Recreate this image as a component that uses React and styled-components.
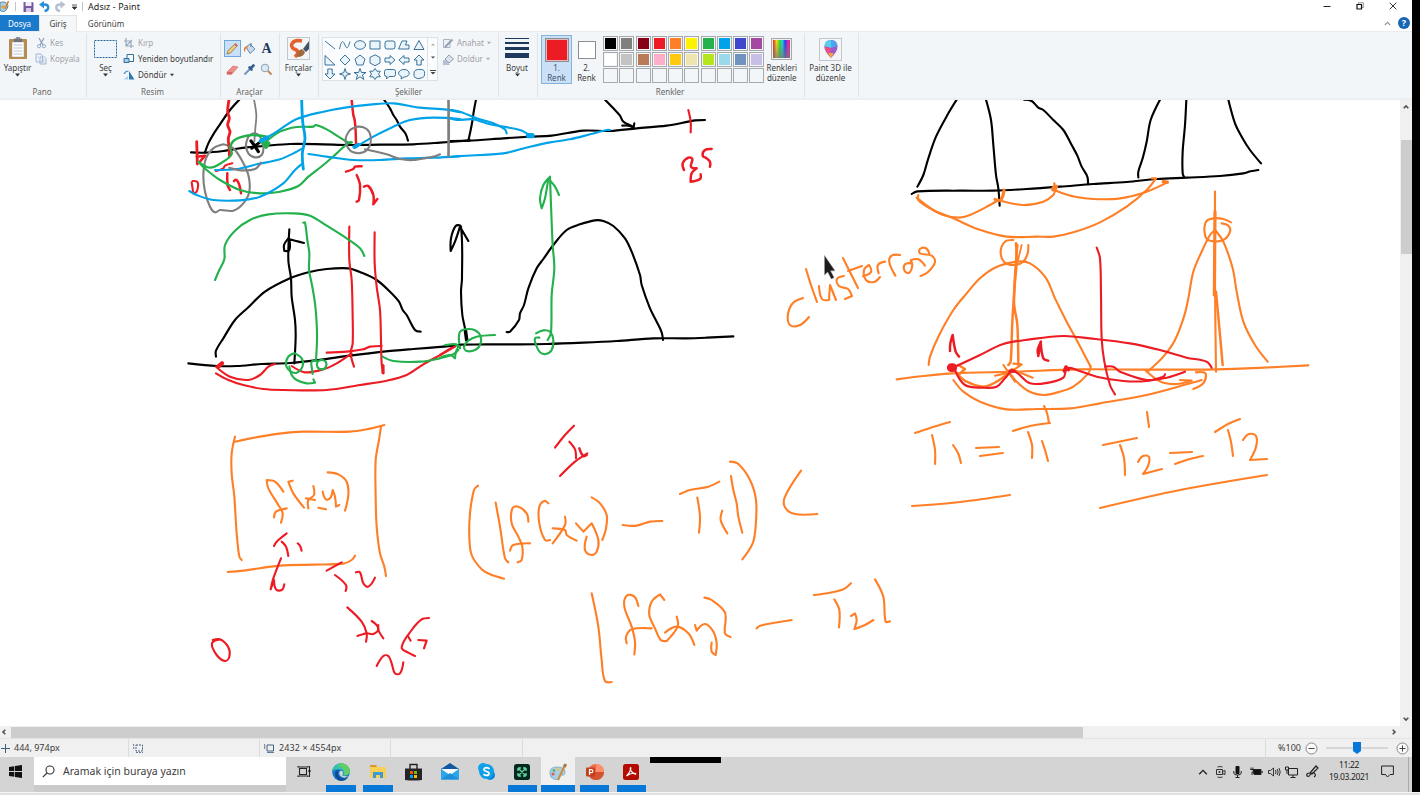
import React from "react";
import styled, { createGlobalStyle } from "styled-components";

const Global = createGlobalStyle`
  * { box-sizing: border-box; }
  html, body { margin: 0; padding: 0; overflow: hidden; background: #000; }
  body { font-family: "Noto Sans", "Open Sans", sans-serif; color: #3c3c3c; }
  svg { display: block; flex: none; }
`;

const Screen = styled.div`
  width: 1420px; height: 795px; display: flex; flex-direction: column; background: #000; overflow: hidden;
`;
const Desktop = styled.div`
  width: 1412px; height: 792px; display: flex; flex-direction: column; background: #fff;
`;
const BottomEdge = styled.div`
  height: 3px; background: #e1e1e1; border-top: 1px solid #f4f4f4;
`;
const Text = styled.span`
  font-size: ${(p) => p.$size || 8}px; line-height: 10px; white-space: nowrap;
  letter-spacing: ${(p) => p.$track || 0}px; color: ${(p) => p.$color || "#3c3c3c"};
`;

const TitleBar = styled.div`
  height: 15px; display: flex; align-items: center; flex: none;
`;
const QuickAccess = styled.div`
  display: flex; align-items: center; width: 88px; flex: none;
`;
const Title = styled(Text)`flex: 1; color: #1c1c1c; margin-top: -1px;`;
const WindowButtons = styled.div`
  display: flex; gap: 25px; padding-right: 15px; margin-top: -3px;
`;

const Tabs = styled.div`
  height: 17px; display: flex; flex: none; border-bottom: 1px solid #e9ebec;
`;
const Tab = styled.div`
  width: ${(p) => p.$w}px; height: ${(p) => (p.$active ? 17 : 16)}px; display: flex; align-items: center; justify-content: center;
  padding-top: ${(p) => (p.$active ? 0 : 1)}px;
  background: ${(p) => (p.$file ? "#1979ca" : p.$active ? "#f5f7f8" : "#fff")};
  border: solid #e2e4e6; border-width: ${(p) => (p.$active ? "1px 1px 0 1px" : "0")};
`;
const TabTools = styled.div`
  margin-left: auto; display: flex; align-items: center; gap: 7px; padding-right: 2px;
`;
const HelpBadge = styled.div`
  width: 12px; height: 12px; border-radius: 50%; background: #1566b7; color: #fff; font-size: 9px; line-height: 12px; font-weight: bold; text-align: center;
`;

const Ribbon = styled.div`
  height: 68px; display: flex; flex: none; background: #f3f6f8; border-bottom: 2px solid #eceeef;
`;
const Group = styled.section`
  width: ${(p) => p.$w}px; height: 64px; margin-top: 1px; display: flex; flex-direction: column; flex: none;
  border-right: 1px solid #e1e4e7;
`;
const GroupBody = styled.div`
  height: 54px; display: flex; padding-left: ${(p) => p.$left || 0}px;
`;
const Caption = styled.div`
  display: flex; justify-content: center; padding-right: ${(p) => p.$shift || 0}px;
`;
const BigButton = styled.div`
  width: ${(p) => p.$w}px; display: flex; flex-direction: column; align-items: center; flex: none;
  height: 50px; padding-top: ${(p) => (p.$top === undefined ? 4 : p.$top)}px;
`;
const IconSlot = styled.div`
  height: 26px; display: flex; align-items: flex-start; justify-content: center;
`;
const Stack = styled.div`
  display: flex; flex-direction: column; padding-top: 2px; padding-left: ${(p) => p.$left || 0}px;
`;
const SmallButton = styled.div`
  height: 16px; display: flex; align-items: center; gap: 3px;
`;
const ToolGrid = styled.div`
  display: grid; grid-template-columns: repeat(3, 17px); grid-template-rows: repeat(2, 21px);
  margin-top: 5px; justify-items: center; align-items: center;
`;
const ToolCell = styled.div`
  width: 17px; height: 17px; display: flex; align-items: center; justify-content: center;
  background: ${(p) => (p.$on ? "#c9e0f7" : "transparent")};
  border: 1px solid ${(p) => (p.$on ? "#6fa5da" : "transparent")};
`;
const LetterA = styled.span`
  font: bold 14px/14px "Liberation Serif", serif; color: #203a5c;
`;
const Gallery = styled.div`
  width: 116px; height: 44px; margin-top: 4px; display: flex; border: 1px solid #dde1e5; background: #fafcfd;
`;
const ShapeGrid = styled.div`
  flex: 1; display: grid; grid-template-columns: repeat(7, 14.8px); grid-template-rows: repeat(3, 14.4px);
  align-items: center; justify-items: center;
`;
const GalleryScroll = styled.div`
  width: 10px; border-left: 1px solid #dde1e5; display: flex; flex-direction: column; justify-content: space-around; align-items: center;
`;
const ColorButton = styled.div`
  width: ${(p) => p.$w}px; height: 49px; margin-top: 2px; display: flex; flex-direction: column; align-items: center; text-align: center;
  background: ${(p) => (p.$on ? "#c9e0f7" : "transparent")}; border: 1px solid ${(p) => (p.$on ? "#84b4de" : "transparent")};
`;
const ColorSlot = styled.div`
  height: 28px; display: flex; align-items: center; justify-content: center;
`;
const CurrentColor = styled.div`
  width: ${(p) => p.$s}px; height: ${(p) => p.$s}px; background: ${(p) => p.$c};
  border: 1px solid #8b8f94; box-shadow: inset 0 0 0 1px ${(p) => (p.$on ? "#e4b8bd" : "#fff")};
`;
const Palette = styled.div`
  display: grid; grid-template-columns: repeat(10, 15px); grid-auto-rows: 15px; column-gap: 1.25px; row-gap: 1px; margin: 3px 0 0 2px; height: 47px;
`;
const Swatch = styled.div`
  background: ${(p) => p.$c || "#f3f6f8"}; border: 1px solid #a6a9ad; box-shadow: inset 0 0 0 1px ${(p) => (p.$c ? "#f6f6f6" : "#f3f6f8")};
`;
const Rainbow = styled.div`
  width: 21px; height: 22px; border: 1px solid #a9a9a9; padding: 1px; background: #eee;
  &::before { content: ""; display: block; height: 100%;
    background: linear-gradient(0deg, rgba(120,120,120,.75), rgba(120,120,120,0)),
      linear-gradient(90deg, #f21c1c, #f5e616 22%, #28dc28 40%, #18d7de 55%, #2a32e8 72%, #df22d8 88%, #f01c50); }
`;
const Framed = styled.div`
  width: 23px; height: 23px; border: 1px solid #c4c7ca; background: #f4f5f6; display: flex; align-items: center; justify-content: center;
`;

const Work = styled.main`
  height: 626px; display: flex; flex: none;
`;
const Paper = styled.div`
  width: 1400px; height: 626px; background: #fff;
`;
const VScroll = styled.div`
  width: 12px; height: 626px; background: #f0f0f0; display: flex; flex-direction: column; align-items: center; padding: 4px 0;
`;
const VThumb = styled.div`
  width: 11px; height: 114px; margin: 30px 0 auto; background: #cdcdcd;
`;
const HScroll = styled.div`
  height: 13px; display: flex; align-items: center; background: #f0f0f0; flex: none; padding: 0 15px 0 1px; border-bottom: 1px solid #e3e3e3;
`;
const HThumb = styled.div`
  width: 1072px; height: 11px; margin: 0 auto 0 4px; background: #cdcdcd;
`;

const StatusBar = styled.div`
  height: 18px; display: flex; background: #f0f0f0; flex: none;
`;
const StatusCell = styled.div`
  width: ${(p) => p.$w}px; display: flex; align-items: center; gap: 4px; padding-left: ${(p) => p.$pad || 0}px;
  border-right: 1px solid #dcdcdc; flex: none;
`;
const ZoomBox = styled.div`
  flex: 1; display: flex; align-items: center; padding-right: 3px; justify-content: flex-end;
`;
const ZoomValue = styled(Text)`margin-right: 4px;`;
const Slider = styled.div`
  width: 62px; height: 12px; margin: 0 8px; display: flex; align-items: center; justify-content: center;
  background: linear-gradient(#d6d6d6, #d6d6d6) center / 100% 2px no-repeat;
`;

const Taskbar = styled.div`
  height: 35px; display: flex; background: #d4d4d4; flex: none;
`;
const StartButton = styled.div`
  width: 34px; height: 29px; padding-left: 9px; display: flex; align-items: center;
`;
const SearchBox = styled.div`
  width: 252px; height: 28px; background: #fff; display: flex; align-items: center; gap: 8px; padding-left: 8px;
  box-shadow: 0 7px 0 #cbcbcb;
`;
const AppButton = styled.div`
  width: ${(p) => p.$w || 36}px; height: 35px; display: flex; flex-direction: column; align-items: center; flex: none;
`;
const AppFace = styled.div`
  height: 28px; width: ${(p) => p.$bar || 30}px; display: flex; align-items: center; justify-content: center; padding-top: 1px;
  background: ${(p) => (p.$on ? "#f0f0f0" : "transparent")};
`;
const AppBar = styled.div`
  height: 7px; width: ${(p) => p.$bar || 30}px; background: #0778d7;
`;
const Redaction = styled.div`
  width: 71px; height: 6px; background: #000; margin-left: 1px;
`;
const Tray = styled.div`
  margin-left: auto; height: 29px; display: flex; align-items: center;
`;
const TrayIcon = styled.div`
  width: ${(p) => p.$w}px; display: flex; justify-content: center; flex: none;
`;
const Clock = styled.div`
  width: 52px; display: flex; flex-direction: column; align-items: center; gap: 2px; padding-bottom: 1px;
`;
const Peek = styled.div`
  width: 4px; height: 35px; align-self: flex-start; border-left: 1px solid #a9a9a9;
`;

const Caret = ({ c = "#333", s = 5 }) => (
  <svg width={s} height="4" viewBox="0 0 5 4"><path d="M0 .5h5L2.5 3.5z" fill={c} /></svg>
);
const Chevron = ({ r = 0, c = "#505050", s = 6, w = 1.6 }) => (
  <svg width={s} height={s} viewBox="0 0 6 6"><path d="M.7 4.3 3 2l2.3 2.3" transform={`rotate(${r} 3 3)`} fill="none" stroke={c} strokeWidth={w} /></svg>
);

const SHAPES = [
  "M2 2l10 8", "M1.5 10c2-9 3.500-9 5.500-4s3 3 5-3.500", "M12.500 6a5.500 4.300 0 1 1-11 0a5.500 4.300 0 1 1 11 0z", "M2 2h10v8H2z",
  "M4 2h6q2 0 2 2v4q0 2-2 2H4q-2 0-2-2V4q0-2 2-2z", "M5 2h5L8.500 6H12v4H1.500z", "M7 1.500l5 9H2z",
  "M2 1.500v9.500h10z", "M7 1l5 5-5 5-5-5z", "M7 1l5 4-2 6H4L2 5z", "M7 .8l5 2.700v5.500l-5 2.700-5-2.700V3.500z",
  "M2 4h5V1.500L12 6l-5 4.500V8H2z", "M12 4H7V1.500L2 6l5 4.500V8h5z", "M4.800 11V6H2l5-5 5 5H9.200v5z",
  "M4.800 1v5H2l5 5 5-5H9.200V1z", "M7 .5l1.300 4.200L12.500 6 8.300 7.300 7 11.500 5.700 7.300 1.500 6l4.200-1.300z",
  "M7 .5l1.500 4H13L9.500 7l1.300 4.500L7 8.800l-3.800 2.700L4.500 7 1 4.500h4.500z", "M7 .5l1.800 2.700h3.500L10.500 6l1.800 2.800H8.800L7 11.500 5.200 8.800H1.700L3.500 6 1.700 3.200h3.500z",
  "M3.500 1.500h7q2 0 2 2v3q0 2-2 2H6L3.500 11 4 8.500h-.5q-2 0-2-2v-3q0-2 2-2z", "M4 11L4.500 8.600C-1 6 2 1.500 7 1.500c7 0 7 7.500 0 7.500z",
  "M4 10q-3-1-2-4-.500-3 2-4 3-1 5-.5 4 0 3.500 4 .5 4-3.500 4.500Q6 11.500 4 10z",
];

const PALETTE = ["#000", "#7f7f7f", "#880015", "#ed1c24", "#ff7f27", "#fff200", "#22b14c", "#00a2e8", "#3f48cc", "#a349a4",
  "#fff", "#c3c3c3", "#b97a57", "#ffaec9", "#ffc90e", "#efe4b0", "#b5e61d", "#99d9ea", "#7092be", "#c8bfe7",
  "", "", "", "", "", "", "", "", "", ""];

const K = "#000", G = "#22b14c", R = "#ed1c24", B = "#00a2e8", S = "#7f7f7f", O = "#ff7f27";

/* Ink sheets: each has an origin on the screen, a unit scale and its pen strokes [colour, width, points]. */
const SHEETS = [
  { x: 180, y: 95, k: 3, strokes: [
    [K, 6, "33,172 75,173 130,168 160,163 200,157 250,153 330,147 430,148 500,150 600,149 700,148 780,143 870,136"],
    [K, 6, "178,14 150,45 120,88 100,118 85,145 75,172"],
    [K, 9, "213,138 222,150 235,170"], [K, 8, "215,160 238,143"],
    [K, 6, "612,14 630,40 640,60 650,75 660,95 676,115 684,137"],
    [S, 5, "222,14 229,60 226,100 223,140"],
    [S, 6, "205,125 198,150 205,175 225,187 245,180 250,155 240,125 222,115 205,125"],
    [S, 6, "130,148 100,160 78,190 70,240 75,290 90,335 105,352 120,345 160,347 190,325 208,290 205,240 185,195 160,160 130,148"],
    [R, 8, "147,14 143,50 148,70 143,90 150,110 145,130 148,165 148,182"],
    [R, 8, "50,140 51,170 52,207"], [R, 7, "50,185 75,182 60,200"],
    [R, 7, "515,14 520,60 524,75 527,110 528,150"],
    [R, 6, "108,228 130,220 135,212 157,205"], [R, 7, "142,235 143,270 150,285 142,270"],
    [R, 7, "162,258 170,255 178,270 183,295"], [R, 6, "35,262 40,295 50,290 53,262 38,258"],
    [R, 7, "498,230 520,222 525,215 545,214"], [R, 7, "530,240 540,270 537,315 530,320"],
    [R, 7, "552,275 565,273 580,300 580,328 592,312"],
    [G, 7, "150,155 160,138 180,127 215,120 260,125"],
    [G, 6, "258,140 300,110 350,96 400,95 407,90 440,103 480,128 500,140 515,142"],
    [G, 6, "150,160 155,178 130,200 90,218 55,200 80,225 120,255 180,285 240,295 300,290 355,273 385,245 430,210 470,175 500,148 515,142"],
    [G, 12, "250,145 265,145 258,155"],
    [B, 8, "365,14 368,80 375,130 367,175 370,222"],
    [B, 6, "240,140 290,110 350,72 430,50 500,37 570,29 640,25 720,38 800,44 840,52"],
    [B, 12, "243,137 262,128"], [B, 11, "523,156 535,149"],
    [B, 6, "525,158 580,125 640,95 690,75 760,68 840,72"],
    [B, 6, "105,225 170,222 230,208 300,193 340,175 368,160"],
    [B, 6, "28,288 50,300 100,315 180,316 240,305 310,265 345,225 368,205"],
    [B, 6, "385,177 440,185 520,195 600,195 680,190 760,188 840,184"],
    [S, 6, "148,218 185,226 225,222 243,203"],
    [S, 6, "510,105 497,130 502,155 520,172 550,172 568,155 572,125 560,102 535,95 510,105"],
    [S, 6, "555,163 620,178 660,192 700,195 745,188 765,184 780,178"],
    [S, 6, "806,14 805,100 806,185"],
  ] },
  { x: 440, y: 95, k: 3, strokes: [
    [K, 6, "30,138 85,137 190,130 270,125 335,122 430,107 510,108 590,100 680,92 745,80 765,76 795,75"],
    [K, 6, "108,14 102,45 95,90 85,137"], [K, 6, "495,14 520,40 540,62 550,80 580,95"],
    [K, 6, "547,92 565,92 580,98"], [K, 6, "583,85 580,100"],
    [S, 6, "25,14 27,100 25,185"],
    [B, 6, "30,45 60,50 110,70 160,85 195,103 200,115"],
    [B, 6, "30,70 50,75 100,73 150,88 240,105 270,122"], [B, 15, "266,122 276,122"],
    [B, 6, "30,186 60,183 190,175 270,155 330,142 390,133 450,118 500,105 510,105"],
    [R, 6, "745,45 752,80 752,112"],
    [R, 7, "732,225 728,205 745,188 757,192 753,215 770,220 755,235 752,260 780,252 782,238"],
    [R, 7, "815,162 795,165 788,182 800,190 810,200 810,215"],
    [K, 6, "80,735 75,700 67,660 63,590 66,550 63,395 47,393 33,430 32,468 45,440 60,395 85,438"],
    [K, 10, "76,705 80,735"],
    [K, 6, "200,711 210,710 237,675 240,655 252,630 265,580 290,520 310,492 340,450 380,405 420,388 465,376 490,378 520,393 555,430 575,470 600,540 605,570 630,640 650,680 665,712 669,735"],
    [K, 6, "60,749 140,748 230,748 320,747 430,743 530,738 640,730 740,730 800,728 880,724"],
    [G, 6, "323,735 333,712 335,600 343,520 338,450 333,330 330,245 310,270 300,310 305,340 315,310 325,250 345,275 357,300"],
    [G, 6, "288,715 310,706 330,710 340,735 335,765 317,777 300,772 288,750 285,730 298,728"],
    [G, 6, "60,760 58,715 75,703 105,706 122,725 120,750 105,765 80,768 72,755 85,737 110,725 165,720"],
    [G, 6, "0,788 30,780 45,790 48,770 58,750"], [G, 6, "10,755 40,748 60,752"], [R, 6, "0,780 45,752"],
  ] },
  { x: 180, y: 200, k: 3, strokes: [
    [K, 6, "328,88 325,180 333,235 335,290 345,360 347,410 343,490"],
    [K, 6, "325,115 312,135 313,153 328,150 328,118 345,122 372,129"],
    [K, 6, "108,470 108,452 130,415 165,360 205,322 255,275 330,235 385,217 440,207 505,205 545,218 590,240 630,275 657,305 668,330 680,345 705,390 722,395"],
    [K, 6, "25,490 110,498 170,498 245,492 330,489 415,480 510,467 610,455 700,447 790,440 840,435"],
    [R, 6, "508,80 508,180 515,240 518,350 518,430 512,460 522,500"],
    [R, 6, "584,97 584,190 590,260 600,330 603,420 605,490 610,520"], [R, 9, "609,497 609,518"],
    [R, 6, "440,458 500,455 550,448 570,440 605,438"], [R, 6, "335,498 375,517 430,508 470,490 515,460"],
    [R, 12, "115,499 126,490"], [R, 6, "108,500 150,530 205,540 240,525 265,500 285,492"],
    [R, 6, "108,520 145,540 190,555 250,567 310,570 440,570 540,555 620,542 680,525 730,493 790,460 825,440"],
    [G, 6, "105,240 118,210 133,178 135,135 165,92 210,60 265,43 340,40 390,47 440,77 500,115 540,145 553,168"],
    [G, 6, "370,68 375,68 382,120 388,160 387,210 395,250 405,310 410,370 411,420 408,480"],
    [G, 6, "343,460 325,470 318,495 330,513 350,518 368,498 365,475 345,460"],
    [G, 6, "425,479 413,485 412,500 425,508 438,500 437,485 425,479"],
    [G, 6, "410,483 395,485 395,500 398,522"], [G, 6, "328,500 335,525 350,540 380,550 405,548 400,538"],
    [G, 6, "608,470 640,483 720,485 780,475 820,463 835,450"], [G, 6, "795,435 825,433 840,440"],
  ] },
  { x: 880, y: 95, k: 3, strokes: [
    [K, 6, "230,14 205,55 168,125 145,190 130,240 112,275"], [K, 6, "318,14 333,75 340,150 348,240 355,280 359,332"],
    [K, 6, "432,14 455,18 475,38 490,45 520,75 550,105 575,150 592,182 605,215 622,245 624,268"],
    [K, 6, "840,14 812,75 800,140 788,190 775,230 775,247"], [K, 6, "919,14 915,90 908,170 908,235 913,247"],
    [K, 6, "1045,14 1065,85 1085,125 1110,165 1143,205"],
    [K, 6, "95,297 112,289 240,287 340,287 440,282 540,275 640,267 740,261 830,252 920,248 1020,243 1090,235 1112,229 1135,225"],
    [O, 6, "115,300 115,315 150,340 190,360 235,368 270,360 330,330 355,315"],
    [O, 6, "110,308 160,345 220,370 295,403 380,425 470,425 520,425 580,412 660,382 740,335 800,285 828,250 815,250"],
    [O, 6, "365,318 430,330 490,320 520,300 525,285 540,292 585,305 640,312 720,310 800,290 862,262"],
    [O, 14, "520,282 527,276"], [O, 6, "523,265 523,285"], [O, 9, "372,285 362,315 345,313"], [O, 10, "850,260 862,262"],
    [O, 6, "50,853 130,843 220,835 400,830 600,823 800,824 1010,823 1150,818 1285,811"],
    [O, 6, "146,810 150,785 175,725 220,645 260,595 300,550 345,518 410,500 450,505 497,548 525,610 560,680 590,735 632,815"],
    [O, 6, "400,435 375,440 362,470 372,500 400,510 430,500 443,475 445,450"],
    [O, 7, "408,445 410,500 405,560 397,680 392,800 385,810"], [O, 7, "412,450 402,620 412,690 415,810"], [O, 5, "425,450 413,500"],
    [O, 6, "1005,290 1005,560 1008,830"], [O, 9, "1005,350 1003,600"], [O, 7, "1008,590 1020,720 1028,810"],
    [O, 6, "1053,382 1030,372 1000,370 978,380 975,420 990,437 1030,435 1050,410 1045,392 1025,385"],
    [O, 6, "1163,800 1125,750 1090,680 1070,590 1058,520 1030,440 1005,405 990,420 965,470 940,530 925,610 912,665 885,735 850,785 805,828"],
    [O, 6, "220,855 250,890 300,920 380,943 470,942 570,940 660,925 800,900 920,868 965,855"],
    [O, 6, "940,882 970,865 978,840 970,832 948,832"], [O, 6, "795,825 825,850 850,863 890,867 935,857 900,855"],
    [O, 6, "632,815 625,835 580,875 540,890 490,900 445,888 410,860 390,835"],
    [O, 7, "235,810 255,822 235,840 260,860 310,875 350,860 385,835"],
    [O, 6, "370,810 405,860"], [O, 6, "345,842 390,830 425,808 400,806"], [O, 6, "458,848 395,822"],
    [R, 6, "650,458 660,490 663,600 665,730 673,800 690,870 705,898"],
    [R, 6, "215,820 300,780 370,747 450,733 550,723 630,730 750,745 840,765 920,788 980,800 995,818"],
    [R, 6, "225,825 255,870 310,878 350,875 375,850 400,828 450,865 510,862 550,848 562,820 590,825 650,845 730,858 800,858 850,845 855,838"],
    [R, 6, "675,815 700,815 720,830 800,855 860,848 915,830"],
    [R, 7, "210,768 211,745 218,720 227,770 237,785"], [R, 7, "483,740 473,765 475,783 482,740 490,790 505,797"],
    [R, 25, "214,818 218,818"], [R, 10, "390,828 402,828"], [R, 10, "553,828 558,816 565,824"],
    [O, 6, "-4,535 -6,510 15,500"], [O, 6, "46,542 28,502 35,482 60,480"],
    [O, 6, "95,505 75,508 74,528 88,533 97,510 92,496 115,493 135,512"],
    [O, 6, "148,475 138,460 120,462 120,475 155,482 165,502 145,530 122,543"],
  ] },
  { x: 200, y: 410, k: 3, strokes: [
    [O, 6, "105,80 95,130 95,190 103,260 110,370 118,440 125,450"], [O, 6, "105,95 180,80 245,70 310,65 450,65 500,58 553,45"],
    [O, 6, "543,50 537,90 527,150 527,260 530,350 540,430 553,470 558,498"], [O, 6, "83,486 130,482 240,467 340,464 430,461 455,450 465,437"],
    [O, 6, "250,245 225,215 200,210 205,235 235,285 248,310 243,338"], [O, 6, "222,322 228,305 260,295"],
    [O, 6, "278,212 265,215 280,250 312,293"], [O, 6, "340,228 342,255 325,270 325,295"], [O, 6, "318,265 345,270"],
    [O, 6, "355,293 378,298"], [O, 6, "368,245 378,268 392,262 398,240 405,260 408,290 418,285"], [O, 6, "383,187 415,193 440,215 445,255 435,302"],
    [R, 6, "222,408 230,395 260,370"], [R, 6, "245,395 258,410 265,438"], [R, 6, "293,400 300,407 305,422"],
    [R, 6, "243,445 220,505 212,538 222,510 228,538 245,540 253,523"], [R, 6, "380,482 425,457"], [R, 6, "405,495 438,525 437,543"],
    [R, 6, "468,487 480,487 490,520 505,530 525,503"], [R, 6, "442,592 485,635 500,670 498,695"],
    [R, 6, "472,678 500,670 520,672 535,655 515,633"], [R, 6, "535,645 535,660 550,685"],
    [R, 6, "38,690 60,688 85,712 88,740 75,753 50,735 36,700 60,688"], [R, 6, "530,768 550,738 565,738 575,760 585,790 600,790 610,757"],
    [R, 6, "687,624 665,628 635,660 605,712 625,728 645,738"], [R, 6, "625,680 632,692"], [R, 6, "655,690 680,692 672,715"],
  ] },
  { x: 450, y: 420, k: 3, strokes: [
    [R, 6, "372,17 345,45 315,83"], [R, 6, "358,65 375,88 378,115"], [R, 7, "388,85 400,108 410,105"], [R, 6, "412,100 375,125 330,168"],
    [O, 6, "84,197 72,210 60,280 58,350 65,405 95,448 120,463 162,476"], [O, 6, "137,248 150,320 165,415 175,427"],
    [O, 6, "235,305 230,280 205,260 187,265 185,310 205,350 217,380 215,420 203,427"], [O, 6, "180,392 190,375 240,370"],
    [O, 6, "295,250 283,243 268,260 268,310 285,360 300,360"], [O, 6, "345,290 345,315 308,370"], [O, 6, "308,325 345,330 350,345 380,362"],
    [O, 6, "378,310 400,335 425,310 445,360 440,395 425,405 405,390 410,350"], [O, 6, "425,232 450,250 470,285 468,325 457,360"],
    [O, 6, "518,315 560,317 600,305 637,303"], [O, 6, "690,222 720,210 775,200 808,185"], [O, 6, "742,233 750,290 747,338"],
    [O, 6, "817,272 812,300 832,340"], [O, 6, "843,168 850,210 860,250 865,290 877,338"],
    [O, 6, "840,125 865,132 900,180 918,240 917,320 908,370 877,418"], [O, 6, "1053,152 1005,230 1005,262 1035,282 1102,282"],
    [O, 6, "425,520 445,620 455,720 465,783 485,786"], [O, 6, "565,558 553,530 530,527 523,560 545,620 555,665 553,703"],
    [O, 6, "530,670 528,650 545,628 605,625"], [O, 6, "643,540 630,523 605,545 598,585 615,625 632,660 650,663"],
    [O, 6, "680,590 683,620 650,663"], [O, 6, "645,638 680,620 715,640 733,675"],
    [O, 6, "735,615 740,632 765,612 790,635 800,670 797,705 785,695 785,668"], [O, 6, "763,533 785,540 825,578 825,640 842,651"],
    [O, 6, "920,625 930,617 1025,600"], [O, 6, "1092,525 1140,518 1180,508 1203,490"], [O, 6, "1153,538 1168,570 1167,622"],
    [O, 6, "1203,588 1215,580 1220,600 1213,627 1245,615 1270,600"], [O, 6, "1275,478 1300,530 1307,605 1320,604"],
  ] },
  { x: 0, y: 0, k: 1, strokes: [
    [O, 2, "803,298 793,303 788,314 790,325 800,325 809,317"], [O, 2, "806,269 811,285 817,302"],
    [O, 2, "819,286 822,299 829,300 830,285 836,300"], [O, 2, "844,276 837,279 839,286 848,289 852,296 845,299"],
    [O, 2, "843,258 851,274 858,288"], [O, 2, "848,271 862,266"], [O, 2, "863,276 871,272 869,265 864,270 866,280 874,282 880,277"],
    [O, 2, "915,433 930,428 950,422"], [O, 2, "932,435 935,450 935,464"], [O, 2, "953,445 958,453 961,463"],
    [O, 2, "976,448 999,447"], [O, 2, "980,456 1003,453"], [O, 2, "1013,431 1030,426 1050,423"], [O, 2, "1028,432 1032,445 1032,458"],
    [O, 2, "1042,441 1045,450 1048,461"], [O, 2, "1044,406 1047,413 1049,423"], [O, 2, "912,506 960,502 1010,495"],
    [O, 2, "1103,445 1137,438"], [O, 2, "1120,445 1124,458 1125,475"], [O, 2, "1138,462 1143,456 1149,457 1148,466 1143,474 1162,469"],
    [O, 2, "1147,412 1149,427"], [O, 2, "1170,453 1192,452"], [O, 2, "1175,464 1190,459 1203,456"],
    [O, 2, "1215,432 1228,424 1240,419"], [O, 2, "1228,430 1231,442 1233,456"], [O, 2, "1243,440 1249,434 1256,436 1256,447 1250,460 1267,459"],
    [O, 2, "1100,508 1180,490 1267,475"],
  ] },
];

/* Turns pen samples into a smooth path, leaving sharp turns as corners. */
function penPath(points) {
  const p = points.split(" ").map((s) => s.split(",").map(Number));
  const tangent = (i) => {
    if (i === 0 || i === p.length - 1) return [0, 0];
    const a = [p[i][0] - p[i - 1][0], p[i][1] - p[i - 1][1]];
    const b = [p[i + 1][0] - p[i][0], p[i + 1][1] - p[i][1]];
    if (a[0] * b[0] + a[1] * b[1] < 0) return [0, 0];
    const t = [a[0] + b[0], a[1] + b[1]];
    const n = Math.hypot(t[0], t[1]) || 1;
    return [t[0] / n, t[1] / n];
  };
  let d = `M${p[0]}`;
  for (let i = 1; i < p.length; i += 1) {
    const l = Math.hypot(p[i][0] - p[i - 1][0], p[i][1] - p[i - 1][1]) * 0.33;
    const t0 = tangent(i - 1);
    const t1 = tangent(i);
    d += `C${p[i - 1][0] + t0[0] * l} ${p[i - 1][1] + t0[1] * l} ${p[i][0] - t1[0] * l} ${p[i][1] - t1[1] * l} ${p[i]}`;
  }
  return d;
}

const Drawing = () => (
  <svg width="1400" height="626" viewBox="0 100 1400 626">
    {SHEETS.map((s, i) => (
      <g key={i} transform={`translate(${s.x} ${s.y}) scale(${1 / s.k})`} fill="none" strokeLinecap="round" strokeLinejoin="round">
        {s.strokes.map(([c, w, p], j) => <path key={j} stroke={c} strokeWidth={w * 1.06} d={penPath(p)} />)}
      </g>
    ))}
    <path d="M824.500 255.500v19.500l3.200-3 3.600 7 2.800-1.400-3.600-6.800h4.500z" fill="#1c1c1c" stroke="#999" strokeWidth=".5" />
  </svg>
);

const TitleIcons = () => (
  <QuickAccess>
    <svg width="83" height="15" viewBox="0 0 83 15">
      <path d="M0 2.500q6-2 8 3-1 6-5 6l-3-1z" fill="#a7d2e8" stroke="#5c8ca8" />
      <circle cx="3" cy="7" r="1.800" fill="#e9a23c" /><path d="M5 9l3.500-8" stroke="#cf7e30" strokeWidth="1.500" />
      <path d="M15.500 2v9" stroke="#c4c4c4" />
      <path d="M23.500 2h9l1 1v9h-10z" fill="#7b59a5" /><path d="M25.500 2h6v4h-6z" fill="#f1edf6" /><path d="M26 8h5v4h-5z" fill="#d5cae3" />
      <path d="M42 4.500h2.500c5 0 5 6 0 6.500" fill="none" stroke="#2a8fd6" strokeWidth="2.400" /><path d="M39 4.500l5-3.500v7.500z" fill="#2a8fd6" />
      <path d="M62 4.500H60c-5 0-5 6 0 6.500" fill="none" stroke="#b4c0cd" strokeWidth="2.400" /><path d="M65.500 4.500l-5-3.500v7.500z" fill="#b4c0cd" />
      <path d="M72 5h5M72.300 7h4.500L74.500 9.500z" stroke="#333" strokeWidth=".8" fill="#333" />
      <path d="M82.500 2v9" stroke="#c4c4c4" />
    </svg>
  </QuickAccess>
);

function RibbonBar() {
  const dim = "#a0a3a8";
  return (
    <Ribbon>
      <Group $w={87}>
        <GroupBody>
          <BigButton $w={35}>
            <IconSlot>
              <svg width="20" height="24" viewBox="0 0 20 24"><rect x="1" y="2" width="18" height="20" rx="1" fill="#b98a4e" /><path d="M4 5h12v15H4z" fill="#fff" stroke="#999" strokeWidth=".5" /><path d="M6 1.500h8V5H6z" fill="#6d747c" /><path d="M8 0h4v2H8z" fill="#8a9198" /><path d="M5.500 8h9m-9 3h9m-9 3h9m-9 3h9" stroke="#b8c4d3" /></svg>
            </IconSlot>
            <Text>Yapıştır</Text><Caret />
          </BigButton>
          <Stack>
            <SmallButton>
              <svg width="12" height="12" viewBox="0 0 12 12"><path d="M4 1l4 7M9 1L5 8" stroke="#8fa0ba" strokeWidth="1.300" /><circle cx="4" cy="9.200" r="1.600" fill="none" stroke="#9aacca" /><circle cx="9" cy="9.200" r="1.600" fill="none" stroke="#9aacca" /></svg>
              <Text $color={dim}>Kes</Text>
            </SmallButton>
            <SmallButton>
              <svg width="12" height="12" viewBox="0 0 12 12"><path d="M1 1h5l1.500 2v6H1z M5 4h4.500L11 5.500V11H5z" fill="#eef3fa" stroke="#a4b6d2" /><path d="M6.500 7h3m-3 2h3M2.500 4H4" stroke="#a4b6d2" strokeWidth=".8" /></svg>
              <Text $color={dim}>Kopyala</Text>
            </SmallButton>
          </Stack>
        </GroupBody>
        <Caption $shift={2}><Text $color="#666">Pano</Text></Caption>
      </Group>

      <Group $w={134}>
        <GroupBody $left={5}>
          <BigButton $w={27}>
            <IconSlot>
              <svg width="24" height="24" viewBox="0 0 24 24"><rect x=".5" y="3.500" width="22" height="17" fill="#eef5fb" stroke="#286296" strokeDasharray="2 1" /></svg>
            </IconSlot>
            <Text>Seç</Text><Caret />
          </BigButton>
          <Stack $left={4}>
            <SmallButton>
              <svg width="12" height="11" viewBox="0 0 12 11"><path d="M3 0v8h8M1 3h7v7M3 8l6-6" fill="none" stroke="#9aa8be" strokeWidth="1.200" /></svg>
              <Text $color={dim}>Kırp</Text>
            </SmallButton>
            <SmallButton>
              <svg width="12" height="10" viewBox="0 0 12 10"><path d="M4 .5h6.500v7H4z" fill="#f7fafc" stroke="#356f9b" /><path d="M1 4.500h5v4H1z" fill="#9ed0ec" stroke="#356f9b" /></svg>
              <Text>Yeniden boyutlandır</Text>
            </SmallButton>
            <SmallButton>
              <svg width="12" height="11" viewBox="0 0 12 11"><path d="M6 1l5.500 8.500H6z" fill="#2878b5" /><path d="M5 6v3.500H.5z" fill="#abd1ea" /><path d="M1 4q1.500-3 4.500-3" fill="none" stroke="#4994cc" strokeWidth="1.200" /></svg>
              <Text>Döndür</Text><Caret s={4} />
            </SmallButton>
          </Stack>
        </GroupBody>
        <Caption $shift={2}><Text $color="#666">Resim</Text></Caption>
      </Group>

      <Group $w={59}>
        <GroupBody $left={3}>
          <ToolGrid>
            <ToolCell $on><svg width="13" height="13" viewBox="0 0 13 13"><path d="M1 12l1-3.500L9.500 1.500l2 2L4.500 11z" fill="#f2cd79" stroke="#7a6542" strokeWidth=".7" /><path d="M9 2l2 2" stroke="#d9675e" strokeWidth="1.800" /></svg></ToolCell>
            <ToolCell><svg width="13" height="13" viewBox="0 0 13 13"><path d="M3 5l4-3 5 5-5 4.500z" fill="#c9dbeb" stroke="#6689ac" /><path d="M8 5V1" stroke="#50779c" /><path d="M1 9q-1-4 3-5l1 1q-3 1-3 5z" fill="#e9783a" /></svg></ToolCell>
            <ToolCell><LetterA>A</LetterA></ToolCell>
            <ToolCell><svg width="13" height="12" viewBox="0 0 13 12"><path d="M1 8l6-6 5 1-6 7H1z" fill="#ee8e8b" stroke="#d06b69" strokeWidth=".6" /><path d="M1 8h5v2.500H1z" fill="#d96563" /></svg></ToolCell>
            <ToolCell><svg width="13" height="13" viewBox="0 0 13 13"><path d="M1.500 11.500L7 6" stroke="#7195b8" strokeWidth="2" /><path d="M6.500 4.500l2 2M8 5l2.500-2.500" stroke="#2e5f91" strokeWidth="2.600" strokeLinecap="round" /></svg></ToolCell>
            <ToolCell><svg width="13" height="13" viewBox="0 0 13 13"><circle cx="5" cy="5" r="3.800" fill="#dbe9f4" stroke="#8ba0b4" /><path d="M8 8l3.500 3.500" stroke="#b98656" strokeWidth="2" /></svg></ToolCell>
          </ToolGrid>
        </GroupBody>
        <Caption $shift={1}><Text $color="#666">Araçlar</Text></Caption>
      </Group>

      <Group $w={39}>
        <GroupBody>
          <BigButton $w={37}>
            <IconSlot><Framed>
              <svg width="22" height="22" viewBox="0 0 22 22"><path d="M14 3C4 1 1 8 6 11q7 2 1 8" fill="none" stroke="#e5602c" strokeWidth="3.500" /><path d="M9 19q0-7 5-8l3 3q-1 5-8 5z" fill="#a06b3c" /><path d="M15 11l6-8v8l-3 3z" fill="#40536a" /></svg>
            </Framed></IconSlot>
            <Text>Fırçalar</Text><Caret />
          </BigButton>
        </GroupBody>
      </Group>

      <Group $w={180}>
        <GroupBody $left={3}>
          <Gallery>
            <ShapeGrid>
              {SHAPES.map((d, i) => (
                <svg key={i} width="14" height="12" viewBox="0 0 14 12"><path d={d} fill={i < 2 ? "none" : "#eaf4fb"} stroke="#316b96" strokeWidth=".95" /></svg>
              ))}
            </ShapeGrid>
            <GalleryScroll>
              <svg width="4" height="3" viewBox="0 0 4 3"><path d="M0 2.500h4L2 .5z" fill="#aaa" /></svg>
              <svg width="4" height="3" viewBox="0 0 4 3"><path d="M0 .5h4L2 2.500z" fill="#444" /></svg>
              <svg width="6" height="5" viewBox="0 0 6 5"><path d="M0 .5h6" stroke="#444" /><path d="M.5 2h5L3 4.500z" fill="#444" /></svg>
            </GalleryScroll>
          </Gallery>
          <Stack $left={5}>
            <SmallButton>
              <svg width="11" height="11" viewBox="0 0 11 11"><path d="M.5 1.500H7v8H.5z" fill="#eef1f5" stroke="#a9b3c2" /><path d="M2 9L9.500 1.500" stroke="#93a0b3" strokeWidth="2" /></svg>
              <Text $color={dim}>Anahat</Text><Caret c="#aaa" s={4} />
            </SmallButton>
            <SmallButton>
              <svg width="11" height="11" viewBox="0 0 11 11"><path d="M2 5l4-4 4.500 4L6 9z" fill="#dce2eb" stroke="#8f9fb4" /><path d="M0 6h3l4 5H0z" fill="#b5c1d0" /></svg>
              <Text $color={dim}>Doldur</Text><Caret c="#aaa" s={4} />
            </SmallButton>
          </Stack>
        </GroupBody>
        <Caption><Text $color="#666">Şekiller</Text></Caption>
      </Group>

      <Group $w={39}>
        <GroupBody>
          <BigButton $w={36}>
            <IconSlot>
              <svg width="24" height="22" viewBox="0 0 24 22"><path d="M0 1h24v1H0zM0 5h24v2H0zM0 10h24v3H0zM0 16h24v5H0z" fill="#1e395b" /></svg>
            </IconSlot>
            <Text>Boyut</Text><Caret />
          </BigButton>
        </GroupBody>
      </Group>

      <Group $w={267}>
        <GroupBody $left={3}>
          <ColorButton $w={31} $on><ColorSlot><CurrentColor $s={24} $c="#ed1c24" $on /></ColorSlot><Text $color="#41566b">1.</Text><Text $color="#41566b">Renk</Text></ColorButton>
          <ColorButton $w={29}><ColorSlot><CurrentColor $s={18} $c="#fff" /></ColorSlot><Text>2.</Text><Text>Renk</Text></ColorButton>
          <Palette>{PALETTE.map((c, i) => <Swatch key={i} $c={c} />)}</Palette>
          <BigButton $w={35} $top={5}><IconSlot><Rainbow /></IconSlot><Text>Renkleri</Text><Text>düzenle</Text></BigButton>
        </GroupBody>
        <Caption $shift={2}><Text $color="#666">Renkler</Text></Caption>
      </Group>

      <Group $w={54}>
        <GroupBody>
          <BigButton $w={51} $top={5}>
            <IconSlot><Framed>
              <svg width="14" height="19" viewBox="0 0 14 19"><path d="M7 0q6 0 6.500 6Q14 11 7 18 0 11 .5 6 1 0 7 0z" fill="#9c59d1" /><path d="M7 0q6 0 6.500 6L7 8z" fill="#4fa4ec" /><path d="M.5 6Q1 0 7 0l0 8z" fill="#54d1e8" /><path d="M.5 7L7 8l-1 8Q1 11 .5 7z" fill="#ec4f80" /><path d="M4 13h6l-3 5z" fill="#f2a63c" /></svg>
            </Framed></IconSlot>
            <Text>Paint 3D ile</Text><Text>düzenle</Text>
          </BigButton>
        </GroupBody>
      </Group>
    </Ribbon>
  );
}

const Pin = ({ w, bar, on, children }) => (
  <AppButton $w={w}><AppFace $bar={bar} $on={on}>{children}</AppFace>{bar ? <AppBar $bar={bar} /> : null}</AppButton>
);

function TaskbarRow() {
  return (
    <Taskbar>
      <StartButton>
        <svg width="13" height="13" viewBox="0 0 13 13"><path d="M0 2l5.300-.8v4.900H0zM6 1.100L13 0v6.100H6zM0 6.900h5.300v4.900L0 11zM6 6.900h7V13l-7-1.100z" fill="#111" /></svg>
      </StartButton>
      <SearchBox>
        <svg width="13" height="13" viewBox="0 0 13 13"><circle cx="8" cy="5" r="4" fill="none" stroke="#333" strokeWidth="1.100" /><path d="M5 8L.8 12.200" stroke="#333" strokeWidth="1.100" /></svg>
        <Text $size={10.5}>Aramak için buraya yazın</Text>
      </SearchBox>
      <Pin w={36}>
        <svg width="14" height="13" viewBox="0 0 14 13"><path d="M2.500 3.500h7v6h-7zM1 1v1h10V1M1 12v-1h10v1M12.500 1v11" fill="none" stroke="#222" strokeWidth="1.100" /><path d="M11.500 5h2v2h-2z" fill="#111" /></svg>
      </Pin>
      <Pin w={38} bar={30}>
        <svg width="18" height="18" viewBox="0 0 18 18"><circle cx="9" cy="9" r="8.800" fill="#1577c6" /><path d="M.5 8C1 3 5 .2 9 .2c5 0 9 4 8.800 8 0 4-4 5-7 4 2-3 0-6-4-6Q2.500 6 .5 8z" fill="#35c1b0" /><path d="M9 .2c5 0 9 4 8.800 8 0 3-3 4.500-6 4 2-6-2-9-6-9z" fill="#62cf62" /><path d="M7 7q-3 5 2 8 4 2 7-1-3 5-9 3.500Q2 14 3.500 9 5 6.500 7 7z" fill="#0f4a98" /><path d="M8 8q3-1 3 2 0 2-1 2 2 2 6 1-3 3-7 .5Q6 11 8 8z" fill="#d4d4d4" /></svg>
      </Pin>
      <Pin w={35} bar={30}>
        <svg width="16" height="15" viewBox="0 0 16 15"><path d="M0 1h6l1 2h9v11H0z" fill="#f8cf57" /><path d="M0 1h6l1 2H0z" fill="#d79b28" /><path d="M3 8h10v6h-3v-3H6v3H3z" fill="#3c99d4" /></svg>
      </Pin>
      <Pin w={36}>
        <svg width="17" height="18" viewBox="0 0 17 18"><path d="M5 6V1.500h7V6" fill="none" stroke="#222" strokeWidth="1.400" /><path d="M0 5.500h17V17q-8 1-17 0z" fill="#252525" /><path d="M5 8h3v3H5z" fill="#f25022" /><path d="M9 8h3v3H9z" fill="#7fba00" /><path d="M5 12h3v3H5z" fill="#00a4ef" /><path d="M9 12h3v3H9z" fill="#ffb900" /></svg>
      </Pin>
      <Pin w={37}>
        <svg width="18" height="17" viewBox="0 0 18 17"><path d="M0 6l9-6 9 6v10H0z" fill="#1258a3" /><path d="M1 6h16v6H1z" fill="#f8fbff" /><path d="M0 6l9 6 9-6v10.500H0z" fill="#2aa7e8" /><path d="M0 16.500L9 10l9 6.500z" fill="#1d8fd9" /></svg>
      </Pin>
      <Pin w={36}>
        <svg width="17" height="17" viewBox="0 0 17 17"><circle cx="5" cy="5" r="5" fill="#10a5ec" /><circle cx="12" cy="12" r="5" fill="#0a86d8" /><circle cx="8.500" cy="8.500" r="7.500" fill="#0f9fe8" /><path d="M11.500 5.800Q8.500 3.500 6.300 5.500 5 7.700 8.500 8.500q3.500.8 2.300 3-2.300 2-5.300-.2" fill="none" stroke="#fff" strokeWidth="1.700" /></svg>
      </Pin>
      <Pin w={36} bar={29}>
        <svg width="16" height="16" viewBox="0 0 16 16"><rect width="16" height="16" rx="2.500" fill="#06291f" /><path d="M4.500 4.500l7 7M11.500 4.500l-7 7M4 4h3M9 4h3M4 12h3m2 0h3M4 4v3m8-3v3M4 12V9m8 3V9" stroke="#5fd3a0" strokeWidth="1.400" /></svg>
      </Pin>
      <Pin w={36} bar={34} on>
        <svg width="18" height="18" viewBox="0 0 18 18"><path d="M1 11Q0 4 8 4q8 0 8 5 0 4-4 3-2 0-2 2-1 4-5 2-4-1-4-5z" fill="#a9cfe6" stroke="#6f9ebd" strokeWidth=".7" /><circle cx="4" cy="11" r="1.500" fill="#e05a47" /><circle cx="5" cy="7.500" r="1.300" fill="#55ab54" /><circle cx="9" cy="6.500" r="1.300" fill="#f1c33e" /><path d="M9 17L16 2" stroke="#cb8e3f" strokeWidth="2" /><path d="M15 4l2-3" stroke="#a87b4a" strokeWidth="3" /></svg>
      </Pin>
      <Pin w={37} bar={29}>
        <svg width="18" height="16" viewBox="0 0 18 16"><circle cx="10" cy="8" r="8" fill="#ed6c47" /><path d="M10 0a8 8 0 0 1 8 8h-8z" fill="#ff8f6b" /><path d="M2 8h16a8 8 0 0 1-16 0z" fill="#d35230" /><rect y="3.500" width="9" height="9" rx="1" fill="#c43e1c" /><path d="M3.500 11V5.700h1.700q1.700 0 1.700 1.500T5.200 8.700H3.500" fill="none" stroke="#fff" strokeWidth="1.200" /></svg>
      </Pin>
      <Pin w={36} bar={29}>
        <svg width="16" height="16" viewBox="0 0 16 16"><rect width="16" height="16" rx="2.500" fill="#b30b00" /><path d="M3.500 12Q7 9 8 4q-1-1-.800 1Q8.500 9 12.500 10.300q1-.8-1-1Q7 9 3.500 12z" fill="none" stroke="#fff" strokeWidth="1.100" /></svg>
      </Pin>
      <Redaction />
      <Tray>
        <TrayIcon $w={18}><Chevron c="#222" s={10} w={0.8} /></TrayIcon>
        <TrayIcon $w={17}><svg width="10" height="12" viewBox="0 0 10 12"><path d="M.5 3.500h6v5h-6zM6.500 5.500l2.500-1v4l-2.500-1M1.500 1q3-1 5 0M1.500 11q3 1 5 0" fill="none" stroke="#333" /><circle cx="3.500" cy="6" r="1" fill="#333" /></svg></TrayIcon>
        <TrayIcon $w={17}><svg width="9" height="13" viewBox="0 0 9 13"><rect x="2.500" y="1" width="4" height="8" rx="1" fill="#111" /><path d="M.8 6v2q0 2 3.700 2t3.700-2V6M4.500 10v2.500M2.500 12.500h4" fill="none" stroke="#222" /></svg></TrayIcon>
        <TrayIcon $w={20}><svg width="13" height="9" viewBox="0 0 13 9"><path d="M3 2.500h8v5H4z" fill="#111" stroke="#222" /><path d="M12.200 4v2M1 .5v2M3 .5v2M.3 2.500h3.500V5H2v3" stroke="#222" fill="none" /></svg></TrayIcon>
        <TrayIcon $w={16}><svg width="13" height="10" viewBox="0 0 13 10"><path d="M.5 3.500h2L5.500 1v8l-3-2.500h-2zM7.500 3q1 2 0 4M9.200 2q2 3 0 6M11 1q2.500 4 0 8" fill="none" stroke="#222" strokeWidth=".9" /></svg></TrayIcon>
        <TrayIcon $w={19}><svg width="13" height="12" viewBox="0 0 13 12"><path d="M3.500 2.500h9v6.500h-9zM8 9v2.500M5.500 11.500h5" fill="none" stroke="#222" /><path d="M.5 1h3v3h-3zM2 4v4" fill="#d4d4d4" stroke="#222" /></svg></TrayIcon>
        <TrayIcon $w={22}><svg width="13" height="13" viewBox="0 0 13 13"><path d="M4 8l6-7 2 2-6 6zM4 8q-4 0-3 3 2 1 3-1 3-4 5-1 1 2-1 3" fill="none" stroke="#222" strokeWidth="1.200" /></svg></TrayIcon>
        <Clock><Text $size={8.5} $track={-0.35} $color="#222">11:22</Text><Text $size={8.5} $track={-0.35} $color="#222">19.03.2021</Text></Clock>
        <TrayIcon $w={25}><svg width="13" height="13" viewBox="0 0 13 13"><path d="M.6 1h11.800v8.500H9L6.500 12 4.500 9.500H.6z" fill="none" stroke="#222" /></svg></TrayIcon>
        <TrayIcon $w={8} />
        <Peek />
      </Tray>
    </Taskbar>
  );
}

const SizeIcon = ({ dashed }) => (
  <svg width="11" height="9" viewBox="0 0 11 9"><path d="M3 1h6.500v6H3z" fill="none" stroke="#406080" strokeDasharray={dashed ? "2 1" : "none"} /><path d="M.7 0v5M3 8.500h7" stroke="#406080" strokeWidth=".8" strokeDasharray={dashed ? "2 1" : "none"} /></svg>
);

export default function App() {
  return (
    <Screen>
      <Global />
      <Desktop>
        <TitleBar>
          <TitleIcons />
          <Title $size={9} $track={0.05}>Adsız - Paint</Title>
          <WindowButtons>
            <svg width="8" height="8" viewBox="0 0 8 8"><path d="M.5 4.500h7" stroke="#222" /></svg>
            <svg width="8" height="8" viewBox="0 0 8 8"><path d="M2.500 2V.7h4.800v4.800H6" fill="none" stroke="#777" strokeWidth=".8" /><path d="M1 2.500h4.500V7H1z" fill="none" stroke="#111" strokeWidth="1.200" /></svg>
            <svg width="8" height="8" viewBox="0 0 8 8"><path d="M.7.7l6.600 6.600M7.300.7L.7 7.300" stroke="#222" strokeWidth=".9" /></svg>
          </WindowButtons>
        </TitleBar>
        <Tabs>
          <Tab $w={39} $file><Text $color="#fff">Dosya</Text></Tab>
          <Tab $w={38} $active><Text>Giriş</Text></Tab>
          <Tab $w={58}><Text>Görünüm</Text></Tab>
          <TabTools>
            <Chevron c="#999" s={7} w={1} />
            <HelpBadge>?</HelpBadge>
          </TabTools>
        </Tabs>
        <RibbonBar />
        <Work>
          <Paper><Drawing /></Paper>
          <VScroll><Chevron /><VThumb /><Chevron r={180} /></VScroll>
        </Work>
        <HScroll><Chevron r={-90} /><HThumb /><Chevron r={90} /></HScroll>
        <StatusBar>
          <StatusCell $w={129} $pad={1}>
            <svg width="9" height="9" viewBox="0 0 9 9"><path d="M4.500 0v9M0 4.500h9" stroke="#406080" /></svg>
            <Text $size={9}>444, 974px</Text>
          </StatusCell>
          <StatusCell $w={131} $pad={4}><SizeIcon dashed /></StatusCell>
          <StatusCell $w={131} $pad={4}><SizeIcon /><Text $size={9} $track={0.1}>2432 × 4554px</Text></StatusCell>
          <StatusCell $w={132} />
          <StatusCell $w={743} />
          <ZoomBox>
            <ZoomValue $size={9}>%100</ZoomValue>
            <svg width="13" height="13" viewBox="0 0 13 13"><circle cx="6.500" cy="6.500" r="5.500" fill="#fafafa" stroke="#888" /><path d="M3.500 6.500h6" stroke="#444" /></svg>
            <Slider><svg width="8" height="12" viewBox="0 0 8 12"><path d="M0 0h8v9l-4 3-4-3z" fill="#0778d7" /></svg></Slider>
            <svg width="13" height="13" viewBox="0 0 13 13"><circle cx="6.500" cy="6.500" r="5.500" fill="#fafafa" stroke="#888" /><path d="M3.500 6.500h6M6.500 3.500v6" stroke="#444" /></svg>
          </ZoomBox>
        </StatusBar>
        <TaskbarRow />
      </Desktop>
      <BottomEdge />
    </Screen>
  );
}
